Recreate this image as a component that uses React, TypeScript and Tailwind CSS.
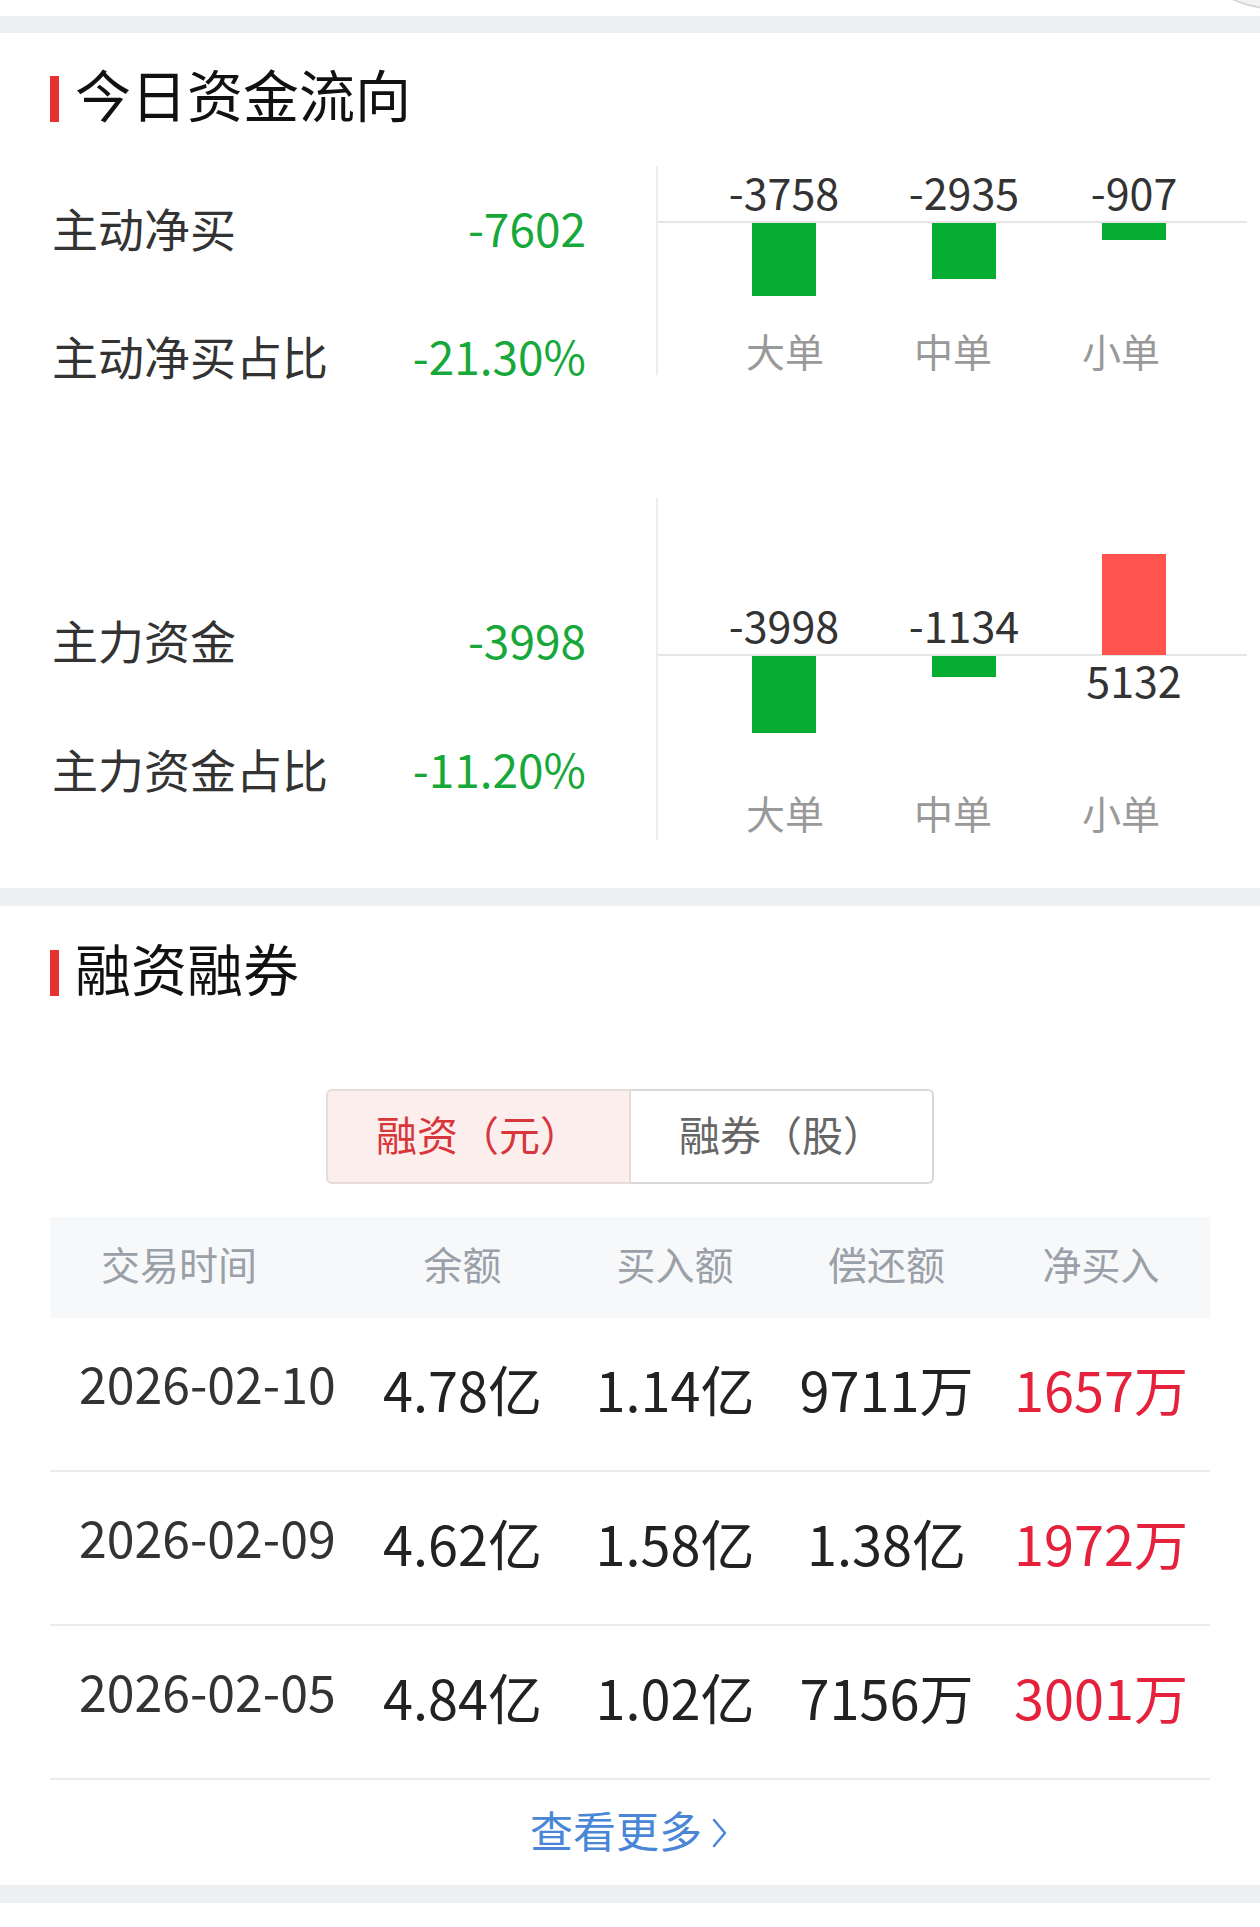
import React from 'react';

type Bar = { name: string; value: number; left: number; labelX: number; h: number };

const flowA: Bar[] = [
  { name: '大单', value: -3758, left: 94, labelX: 127, h: 73 },
  { name: '中单', value: -2935, left: 274, labelX: 295, h: 56 },
  { name: '小单', value: -907, left: 444, labelX: 463, h: 17 },
];

const flowB: Bar[] = [
  { name: '大单', value: -3998, left: 94, labelX: 127, h: 77 },
  { name: '中单', value: -1134, left: 274, labelX: 295, h: 21 },
  { name: '小单', value: 5132, left: 444, labelX: 463, h: 101 },
];

const rows = [
  { date: '2026-02-10', balance: '4.78亿', buy: '1.14亿', repay: '9711万', net: '1657万' },
  { date: '2026-02-09', balance: '4.62亿', buy: '1.58亿', repay: '1.38亿', net: '1972万' },
  { date: '2026-02-05', balance: '4.84亿', buy: '1.02亿', repay: '7156万', net: '3001万' },
];

function SectionTitle({ text }: { text: string }) {
  return (
    <div className="flex items-center h-[56px] pl-[50px]">
      <div className="w-[9px] h-[46px] bg-[#e8322f] mt-[4px]" />
      <span className="ml-[16px] text-[56px] leading-none text-[#111] -translate-y-[4px]">{text}</span>
    </div>
  );
}

function Chart({ data, height, baseline, catY }: { data: Bar[]; height: number; baseline: number; catY: number }) {
  return (
    <div className="relative w-[591px] border-l-2 border-[#ededed]" style={{ height }}>
      <div className="absolute left-0 right-0 h-[2px] bg-[#e6e6e6]" style={{ top: baseline - 1 }} />
      {data.map((b) => {
        const up = b.value > 0;
        const cx = b.left + 32;
        return (
          <React.Fragment key={b.name}>
            <div
              className={`absolute w-[64px] ${up ? 'bg-[#ff5350]' : 'bg-[#05ae33]'}`}
              style={{ left: b.left, top: up ? baseline - b.h : baseline + 1, height: b.h }}
            />
            <span
              className="absolute -translate-x-1/2 -translate-y-1/2 whitespace-nowrap leading-none text-[43px] text-[#333]"
              style={{ left: cx, top: up ? baseline + 24 : baseline - 31 }}
            >
              {b.value}
            </span>
            <span
              className="absolute -translate-x-1/2 -translate-y-1/2 whitespace-nowrap leading-none text-[39px] text-[#999]"
              style={{ left: b.labelX, top: catY - 3 }}
            >
              {b.name}
            </span>
          </React.Fragment>
        );
      })}
    </div>
  );
}

function StatRow({ label, value, className = '' }: { label: string; value: string; className?: string }) {
  return (
    <div className={`flex items-center justify-between h-[46px] ${className}`}>
      <span className="text-[46px] leading-none text-[#333] -translate-y-[4px]">{label}</span>
      <span className="text-[46px] leading-none text-[#17a83a] -translate-y-[4px]">{value}</span>
    </div>
  );
}

export default function App() {
  return (
    <div className="relative w-[1260px] min-h-[1927px] overflow-hidden bg-white font-['Noto_Sans_CJK_SC','Noto_Sans',sans-serif]">
      {/* 상단 */}
      <div className="relative h-[16px] bg-white">
        <div className="absolute left-[1186px] top-[-159px] w-[168px] h-[168px] rounded-full bg-[#f3f3f3] border-2 border-[#d6d6d6]" />
      </div>
      <div className="h-[17px] bg-[#eeeff1]" />

      {/* 今日资金流向 */}
      <section className="bg-white pt-[36px] pb-[48px]">
        <SectionTitle text="今日资金流向" />

        <div className="flex items-start mt-[41px]">
          <div className="w-[656px] pl-[52px] pr-[70px] pt-[42px]">
            <StatRow label="主动净买" value="-7602" />
            <StatRow label="主动净买占比" value="-21.30%" className="mt-[82px]" />
          </div>
          <Chart data={flowA} height={209} baseline={56} catY={187} />
        </div>

        <div className="flex items-start mt-[116px]">
          <div className="w-[656px] pl-[52px] pr-[70px] pt-[122px]">
            <StatRow label="主力资金" value="-3998" />
            <StatRow label="主力资金占比" value="-11.20%" className="mt-[83px]" />
          </div>
          <Chart data={flowB} height={342} baseline={157} catY={317} />
        </div>
      </section>

      <div className="h-[18px] bg-[#eeeff1]" />

      {/* 融资融券 */}
      <section className="bg-white pt-[37px]">
        <SectionTitle text="融资融券" />

        <div className="flex justify-center mt-[90px]">
          <div className="w-[305px] h-[95px] flex items-center justify-center rounded-l-[6px] border-2 border-[#e6dcdc] bg-[#fdeeee] text-[41px] leading-none text-[#d7363a]">
            <span className="-translate-y-[3px]">融资（元）</span>
          </div>
          <div className="w-[303px] h-[95px] flex items-center justify-center rounded-r-[6px] border-2 border-l-0 border-[#d8d8d8] bg-white text-[41px] leading-none text-[#666]">
            <span className="-translate-y-[3px]">融券（股）</span>
          </div>
        </div>

        <div className="mx-[50px] mt-[33px]">
          <div className="grid grid-cols-[306px_213px_212px_211px_218px] h-[101px] items-center bg-[#f7f8f9] text-[39px] leading-none text-[#9aa0a8]">
            <span className="pl-[51px] -translate-y-[4px]">交易时间</span>
            <span className="text-center -translate-y-[4px]">余额</span>
            <span className="text-center -translate-y-[4px]">买入额</span>
            <span className="text-center -translate-y-[4px]">偿还额</span>
            <span className="text-center -translate-y-[4px]">净买入</span>
          </div>
          {rows.map((r) => (
            <div
              key={r.date}
              className="grid grid-cols-[306px_213px_212px_211px_218px] h-[154px] items-center border-b-2 border-[#ebebeb] leading-none"
            >
              <span className="pl-[29px] pb-[12px] text-[50px] text-[#333] -translate-y-[6px]">{r.date}</span>
              <span className="text-center text-[54px] text-[#222] -translate-y-[5px]">{r.balance}</span>
              <span className="text-center text-[54px] text-[#222] -translate-y-[5px]">{r.buy}</span>
              <span className="text-center text-[54px] text-[#222] -translate-y-[5px]">{r.repay}</span>
              <span className="text-center text-[54px] text-[#e5213c] -translate-y-[5px]">{r.net}</span>
            </div>
          ))}
        </div>

        <div className="flex h-[105px] items-center justify-center text-[43px] leading-none text-[#4a86d6]">
          <span className="-translate-y-[3px]">查看更多</span>
          <svg width="20" height="34" viewBox="0 0 20 34" className="ml-[8px]" fill="none">
            <path d="M4 4 L15 17 L4 30" stroke="#4a86d6" strokeWidth="2.5" strokeLinecap="round" strokeLinejoin="round" />
          </svg>
        </div>
      </section>

      <div className="h-[18px] bg-[#eeeff1]" />
      <div className="h-[26px] bg-white" />
    </div>
  );
}
